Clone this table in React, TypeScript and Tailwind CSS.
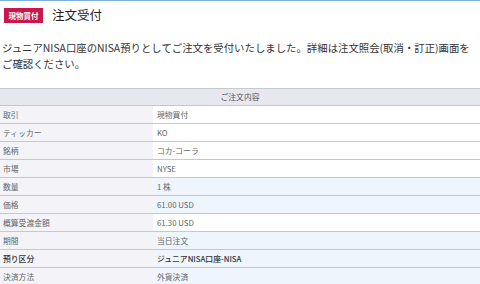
import React from "react";

const rows: { label: string; value: string; blue: boolean; strong?: boolean }[] = [
  { label: "取引", value: "現物買付", blue: false },
  { label: "ティッカー", value: "KO", blue: false },
  { label: "銘柄", value: "コカ-コーラ", blue: false },
  { label: "市場", value: "NYSE", blue: false },
  { label: "数量", value: "1 株", blue: true },
  { label: "価格", value: "61.00 USD", blue: true },
  { label: "概算受渡金額", value: "61.30 USD", blue: false },
  { label: "期間", value: "当日注文", blue: true },
  { label: "預り区分", value: "ジュニアNISA口座-NISA", blue: true, strong: true },
  { label: "決済方法", value: "外貨決済", blue: true },
];

export default function App() {
  return (
    <div
      className="w-[480px] h-[284px] overflow-hidden bg-white border-t border-[#7eb0e2] text-[#333]"
      style={{ fontFamily: '"Noto Sans CJK JP", "Noto Sans", sans-serif' }}
    >
      <div className="flex items-center pl-[4px] pt-[7px] h-[15px] box-content">
        <span className="flex items-center justify-center w-[39px] h-[15px] bg-[#c8174b] text-white text-[7.5px] font-bold leading-none">
          現物買付
        </span>
        <span className="ml-[9px] text-[12.5px] leading-none text-[#222]">注文受付</span>
      </div>
      <p className="mt-[17px] px-[2px] text-[10.4px] leading-[16px] text-[#333] whitespace-nowrap">
        ジュニアNISA口座のNISA預りとしてご注文を受付いたしました。詳細は注文照会(取消・訂正)画面を
        <br />
        ご確認ください。
      </p>
      <div className="mt-[16px] border-t border-[#c6c8d0]">
        <div className="h-[17px] bg-[#e7e7f0] border-b border-[#c6c8d0] flex items-center justify-center text-[7.8px] text-[#555]">
          ご注文内容
        </div>
        {rows.map((r) => (
          <div key={r.label} className="flex h-[18px] border-b border-[#c6c8d0]">
            <div className="w-[153px] bg-[#f4f4f8] flex items-center pl-[3px] text-[7.8px] text-[#666]">
              <span className={r.strong ? "text-[#333] font-medium" : ""}>{r.label}</span>
            </div>
            <div
              className={`flex-1 flex items-center pl-[4px] text-[7.8px] ${
                r.blue ? "bg-[#eef5fd]" : "bg-white"
              } ${r.strong ? "text-[#333] font-medium" : "text-[#666]"}`}
            >
              {r.value}
            </div>
          </div>
        ))}
      </div>
    </div>
  );
}
